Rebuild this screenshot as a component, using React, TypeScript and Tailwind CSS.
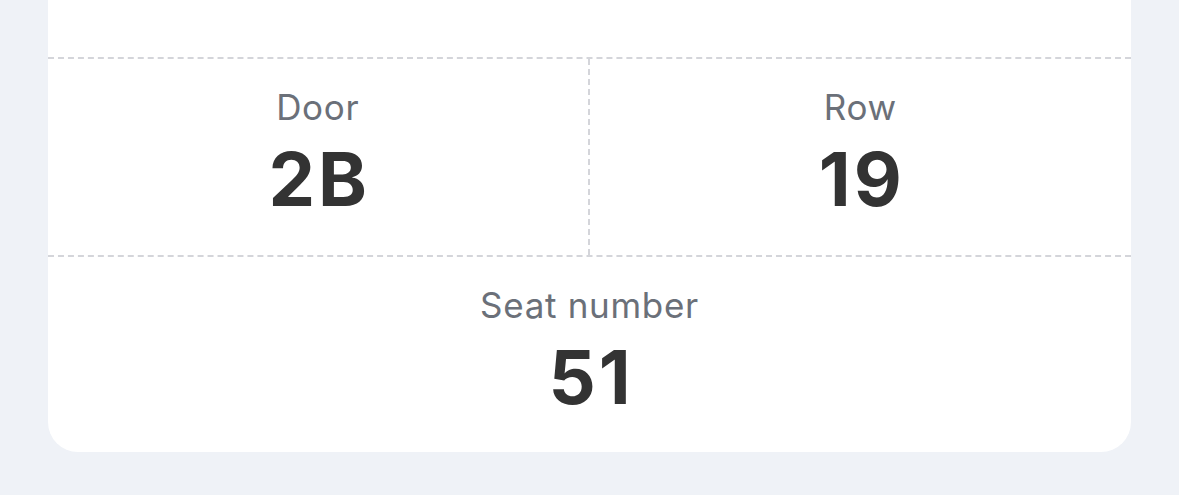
export default function App() {
  return (
    <div className="min-h-[495px] w-full bg-[#eff2f7] px-12 pb-[43px] font-['Inter','Noto_Sans',sans-serif]">
      <div className="flex flex-col rounded-b-[30px] bg-white">
        <div className="h-[57px]" />
        <div className="grid grid-cols-2 border-t-2 border-dashed border-[#d4d5da]">
          <Cell label="Door" value="2B" className="border-r-2 border-dashed border-[#d4d5da]" />
          <Cell label="Row" value="19" />
        </div>
        <div className="border-t-2 border-dashed border-[#d4d5da]">
          <Cell label="Seat number" value="51" last />
        </div>
      </div>
    </div>
  );
}

function Cell({
  label,
  value,
  className = "",
  last = false,
}: {
  label: string;
  value: string;
  className?: string;
  last?: boolean;
}) {
  return (
    <div className={`flex flex-col items-center pt-[28px] ${last ? "pb-[38px]" : "pb-[39px]"} ${className}`}>
      <span className="text-[35px] leading-[40px] tracking-[0.02em] text-[#6b7079]">{label}</span>
      <span className="mt-[15px] pl-[3px] text-[74px] font-bold leading-[74px] tracking-[0.04em] text-[#333333]">{value}</span>
    </div>
  );
}
